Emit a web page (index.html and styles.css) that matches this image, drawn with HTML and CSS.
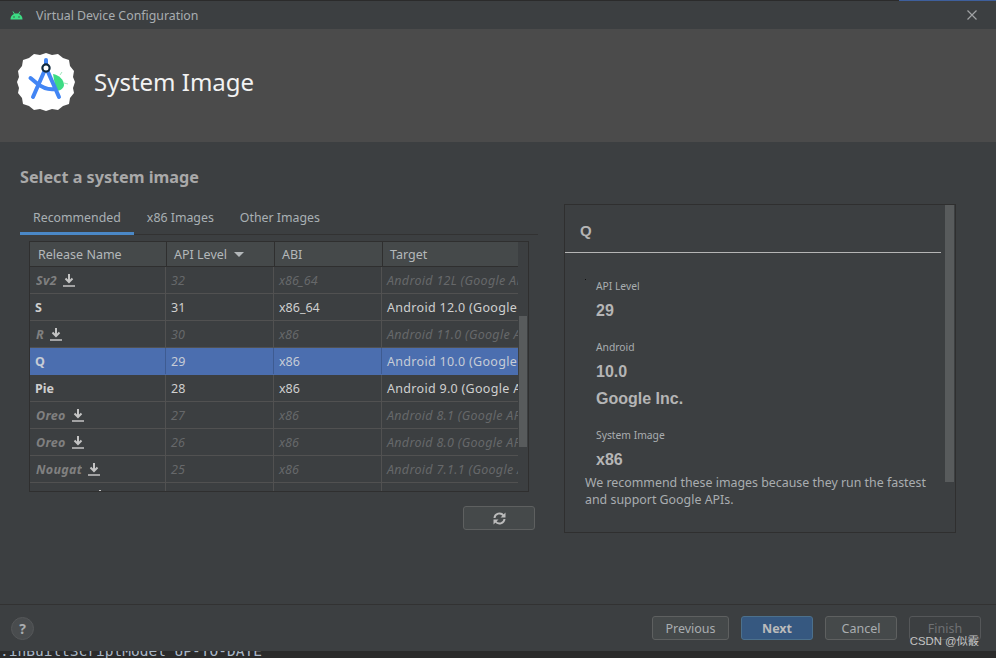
FILE: index.html
```html
<!DOCTYPE html>
<html lang="en">
  <head>
    <meta charset="UTF-8" />
    <meta name="viewport" content="width=device-width, initial-scale=1.0" />
    <title>Virtual Device Configuration</title>
    <link rel="stylesheet" href="styles.css">
  </head>
  <body>
    <div class="top-strip"><span class="top-strip-blue"></span></div>

    <!-- Title bar -->
    <div class="titlebar">
      <svg class="droid" width="13" height="9" viewBox="0 0 13 9">
        <path d="M.5 8.500C.5 5 3 2.500 6.500 2.500s6 2.500 6 6z" fill="#3ddc84" />
        <path d="M3 .5l1.500 2.500M10 .5L8.500 3" stroke="#3ddc84" stroke-width="1" />
        <circle cx="4" cy="6" r=".7" fill="#3c3f41" />
        <circle cx="9" cy="6" r=".7" fill="#3c3f41" />
      </svg>
      <span class="titlebar-text">Virtual Device Configuration</span>
      <svg class="close" width="10" height="10" viewBox="0 0 10 10">
        <path d="M.5.500l9 9M9.500.500l-9 9" stroke="#a0a2a4" stroke-width="1.200" />
      </svg>
    </div>

    <!-- Header -->
    <div class="header">
      <svg class="logo" width="60" height="60" viewBox="0 0 60 60">
        <path d="M30 1l6 2 6-1 5 4 6 2 1 6 4 5-1 6 2 5-2 6 1 5-4 5-1 6-6 2-5 4-6-1-6 2-6-2-6 1-5-4-6-2-1-6-4-5 1-5-2-6 2-5-1-6 4-5 1-6 6-2 5-4 6 1z" fill="#fff" />
        <path d="M37 22c6 1 11 6 11 11 0 3-4 6-8 6z" fill="#3ddc84" />
        <path d="M44 23l2-3M48 31l4 1" stroke="#9ee8bd" stroke-width="1" />
        <path d="M30 8v8M28 20L17 45M32 20l11 25M14.500 26l6 5c6 5 13 7 19 6" stroke="#4285f4" stroke-width="4" fill="none" stroke-linecap="round" />
        <circle cx="30" cy="16" r="3.600" fill="#fff" stroke="#10293d" stroke-width="2.200" />
      </svg>
      <h1 class="header-title">System Image</h1>
    </div>

    <!-- Main content -->
    <div class="main">
      <h2 class="section-title">Select a system image</h2>
      <div class="columns">
        <div class="left">
          <div class="tabs">
            <div class="tab active">Recommended</div>
            <div class="tab">x86 Images</div>
            <div class="tab">Other Images</div>
          </div>

          <div class="table">
            <div class="table-inner">
              <div class="row head">
                <div class="cell">Release Name</div>
                <div class="cell">API Level <span class="sort"></span></div>
                <div class="cell">ABI</div>
                <div class="cell">Target</div>
              </div>
              <div class="row off">
                <div class="cell name"><span class="clip">Sv2</span><svg class="dl" width="12" height="13" viewBox="0 0 12 13"><path d="M6 0v7M2.500 4.500L6 8l3.500-3.500" stroke="#c4c4c4" stroke-width="2" fill="none" /><path d="M0 12h12" stroke="#c4c4c4" stroke-width="1.500" /></svg></div>
                <div class="cell">32</div>
                <div class="cell">x86_64</div>
                <div class="cell target">Android 12L (Google APIs)</div>
              </div>
              <div class="row">
                <div class="cell name">S</div>
                <div class="cell">31</div>
                <div class="cell">x86_64</div>
                <div class="cell target">Android 12.0 (Google APIs)</div>
              </div>
              <div class="row off">
                <div class="cell name"><span class="clip">R</span><svg class="dl" width="12" height="13" viewBox="0 0 12 13"><path d="M6 0v7M2.500 4.500L6 8l3.500-3.500" stroke="#c4c4c4" stroke-width="2" fill="none" /><path d="M0 12h12" stroke="#c4c4c4" stroke-width="1.500" /></svg></div>
                <div class="cell">30</div>
                <div class="cell">x86</div>
                <div class="cell target">Android 11.0 (Google APIs)</div>
              </div>
              <div class="row selected">
                <div class="cell name">Q</div>
                <div class="cell">29</div>
                <div class="cell">x86</div>
                <div class="cell target">Android 10.0 (Google APIs)</div>
              </div>
              <div class="row">
                <div class="cell name">Pie</div>
                <div class="cell">28</div>
                <div class="cell">x86</div>
                <div class="cell target">Android 9.0 (Google APIs)</div>
              </div>
              <div class="row off">
                <div class="cell name"><span class="clip">Oreo</span><svg class="dl" width="12" height="13" viewBox="0 0 12 13"><path d="M6 0v7M2.500 4.500L6 8l3.500-3.500" stroke="#c4c4c4" stroke-width="2" fill="none" /><path d="M0 12h12" stroke="#c4c4c4" stroke-width="1.500" /></svg></div>
                <div class="cell">27</div>
                <div class="cell">x86</div>
                <div class="cell target">Android 8.1 (Google APIs)</div>
              </div>
              <div class="row off">
                <div class="cell name"><span class="clip">Oreo</span><svg class="dl" width="12" height="13" viewBox="0 0 12 13"><path d="M6 0v7M2.500 4.500L6 8l3.500-3.500" stroke="#c4c4c4" stroke-width="2" fill="none" /><path d="M0 12h12" stroke="#c4c4c4" stroke-width="1.500" /></svg></div>
                <div class="cell">26</div>
                <div class="cell">x86</div>
                <div class="cell target">Android 8.0 (Google APIs)</div>
              </div>
              <div class="row off">
                <div class="cell name"><span class="clip">Nougat</span><svg class="dl" width="12" height="13" viewBox="0 0 12 13"><path d="M6 0v7M2.500 4.500L6 8l3.500-3.500" stroke="#c4c4c4" stroke-width="2" fill="none" /><path d="M0 12h12" stroke="#c4c4c4" stroke-width="1.500" /></svg></div>
                <div class="cell">25</div>
                <div class="cell">x86</div>
                <div class="cell target">Android 7.1.1 (Google APIs)</div>
              </div>
              <div class="row off">
                <div class="cell name"><svg class="dl last" width="12" height="13" viewBox="0 0 12 13"><path d="M6 0v7" stroke="#c4c4c4" stroke-width="2" fill="none" /></svg></div>
                <div class="cell"></div>
                <div class="cell"></div>
                <div class="cell"></div>
              </div>
            </div>
            <div class="table-scroll"><div class="table-thumb"></div></div>
          </div>

          <div class="refresh-row">
            <button class="btn refresh">
              <svg width="13" height="13" viewBox="0 0 13 13">
                <path d="M1.500 6A5 5 0 0 1 10.500 3.500M11.500 7A5 5 0 0 1 2.500 9.500" stroke="#bbb" stroke-width="2" fill="none" />
                <path d="M12.500 0.500v5h-5zM.5 12.500v-5h5z" fill="#bbb" />
              </svg>
            </button>
          </div>
        </div>

        <div class="panel">
          <div class="panel-content">
            <div class="panel-title">Q</div>
            <div class="panel-body">
              <span class="speck"></span>
              <div class="label first">API Level</div>
              <div class="value">29</div>
              <div class="label android">Android</div>
              <div class="value ver">10.0</div>
              <div class="value">Google Inc.</div>
              <div class="label image">System Image</div>
              <div class="value ver">x86</div>
              <p class="note">We recommend these images because they run the fastest and support Google APIs.</p>
            </div>
          </div>
          <div class="panel-scroll"></div>
        </div>
      </div>
    </div>

    <!-- Footer -->
    <div class="footer">
      <div class="help">?</div>
      <div class="footer-buttons">
        <button class="btn">Previous</button>
        <button class="btn primary">Next</button>
        <button class="btn cancel">Cancel</button>
        <button class="btn disabled">Finish</button>
      </div>
      <span class="watermark">CSDN @似霰</span>
    </div>

    <div class="terminal">:inBuiltScriptModel UP-TO-DATE</div>
  </body>
</html>
```

FILE: styles.css
```css
* {
  box-sizing: border-box;
}

html,
body {
  height: 100%;
}

body {
  margin: 0;
  display: flex;
  flex-direction: column;
  overflow: hidden;
  background: #3c3f41;
  color: #bbbbbb;
  font-family: "Noto Sans", "Open Sans", sans-serif;
  font-size: 13px;
}

.top-strip {
  height: 1px;
  display: flex;
  justify-content: flex-end;
  background: #2b2b2b;
}

.top-strip-blue {
  width: 97px;
  background: #3e5f9c;
}

/* Title bar */
.titlebar {
  height: 28px;
  display: flex;
  align-items: center;
  padding-left: 10px;
  padding-right: 19px;
  background: #3c3f41;
}

.titlebar-text {
  margin-left: 13px;
  font-size: 12.35px;
  color: #a8adb0;
}

.close {
  margin-left: auto;
}

/* Header */
.header {
  height: 113px;
  display: flex;
  align-items: center;
  padding: 0 0 7px 16px;
  background: #4b4b4b;
}

.header-title {
  margin: 0 0 2px 18px;
  font-size: 24px;
  font-weight: 400;
  color: #f2f2f2;
}

/* Main */
.main {
  height: 463px;
  padding: 24px 40px 0 20px;
  border-bottom: 1px solid #323232;
}

.section-title {
  margin: 0;
  height: 24px;
  line-height: 22px;
  font-size: 16.2px;
  font-weight: 700;
  color: #a9a9a9;
}

.columns {
  display: flex;
  align-items: flex-start;
  justify-content: space-between;
}

.left {
  width: 518px;
  margin-top: 15px;
}

.tabs {
  display: flex;
  height: 30px;
  border-bottom: 1px solid #323232;
}

.tab {
  height: 30px;
  padding: 4px 13px 0;
  font-size: 12.35px;
  color: #a9b0b4;
}

.tab.active {
  border-bottom: 3px solid #4a88c7;
}

/* Table */
.table {
  display: flex;
  width: 500px;
  height: 251px;
  margin: 6px 0 0 9px;
  overflow: hidden;
  border: 1px solid #2f2f2f;
  background: #3c3f41;
}

.table-inner {
  width: 488px;
  overflow: hidden;
}

.table-scroll {
  flex: 1;
  padding: 74px 1px 0 1px;
  background: #3c3f41;
}

.table-thumb {
  height: 131px;
  background: #585b5c;
}

.row {
  display: grid;
  grid-template-columns: 136px 108px 108px 136px;
  height: 27px;
  border-bottom: 1px solid #515151;
  font-size: 12.5px;
  color: #cfcfcf;
}

.cell {
  display: flex;
  align-items: center;
  padding: 0 0 0 5px;
  overflow: hidden;
  white-space: nowrap;
  border-right: 1px solid #515151;
}

.cell:last-child {
  border-right: 0;
}

.cell.name {
  font-weight: 700;
}

.cell.target {
  letter-spacing: 0.3px;
}

.head {
  grid-template-columns: 137px 108px 108px 135px;
  height: 25px;
  border-bottom: 1px solid #2f2f2f;
  background: #45494a;
  color: #b4b8ba;
}

.head .cell {
  padding-left: 7px;
  border-right: 1px solid #2f2f2f;
}

.head .cell:first-child {
  padding-left: 8px;
}

.head .cell:last-child {
  border-right: 0;
}

.sort {
  width: 0;
  height: 0;
  margin-left: 7px;
  border-left: 5px solid transparent;
  border-right: 5px solid transparent;
  border-top: 5px solid #b4b8ba;
}

.off {
  font-style: italic;
  color: #66686a;
}

.off .name {
  padding-left: 6px;
  letter-spacing: 0.3px;
  color: #808080;
}

.off .clip {
  overflow: hidden;
}

.dl {
  flex: none;
  margin-left: 6px;
}

/* Only the tip of this row's icon shows above the table edge */
.dl.last {
  margin-left: 58px;
}

.selected {
  background: #4b6eaf;
  color: #c6ccd6;
  border-bottom-color: #4b6eaf;
}

.selected .cell {
  border-right-color: #3e5b91;
}

.refresh-row {
  display: flex;
  justify-content: flex-end;
  margin-top: 14px;
  padding-right: 3px;
}

/* Buttons */
.btn {
  height: 24px;
  padding: 0;
  border: 1px solid #5e6060;
  border-radius: 3px;
  background: #45494a;
  color: #a9adb0;
  font-family: inherit;
  font-size: 12.5px;
}

.refresh {
  width: 72px;
  display: flex;
  align-items: center;
  justify-content: center;
}

/* Right panel */
.panel {
  display: flex;
  width: 392px;
  height: 329px;
  margin-top: 14px;
  border: 1px solid #2f2f2f;
}

.panel-content {
  width: 376px;
}

.panel-title {
  height: 48px;
  padding: 14px 0 0 15px;
  border-bottom: 1px solid #b5b5b5;
  font-family: "Liberation Sans", sans-serif;
  font-size: 15px;
  font-weight: 700;
  line-height: 24px;
  color: #b5b5b5;
}

.panel-body {
  position: relative;
  padding: 26px 0 0 31px;
}

.speck {
  position: absolute;
  top: 26px;
  left: 20px;
  width: 1px;
  height: 1px;
  background: #111111;
}

.label {
  margin-top: 16px;
  height: 14px;
  line-height: 14px;
  font-size: 10.300px;
  color: #a9adb0;
}

.label.first {
  margin-top: 0;
}

.label.android {
  margin-top: 19px;
}

.label.image {
  margin-top: 19px;
}

.value {
  margin-top: 7px;
  height: 20px;
  line-height: 20px;
  font-family: "Liberation Sans", sans-serif;
  font-size: 16px;
  font-weight: 700;
  color: #b5b5b5;
}

.value.ver {
  margin-top: 8px;
}

.label.first + .value {
  margin-top: 8px;
}

.note {
  width: 350px;
  margin: 4px 0 0 -11px;
  font-size: 12.400px;
  line-height: 17px;
  color: #a9adb0;
}

.panel-scroll {
  width: 9px;
  height: 277px;
  margin-left: 4px;
  background: #585b5c;
}

/* Footer */
.footer {
  position: relative;
  flex: 1;
  display: flex;
  align-items: flex-start;
  justify-content: space-between;
  padding: 11px 15px 0 11px;
}

.help {
  width: 23px;
  height: 23px;
  margin-top: 1px;
  border-radius: 50%;
  border: 1px solid #555759;
  background: #494c4e;
  text-align: center;
  font-size: 14px;
  font-weight: 700;
  line-height: 21px;
  color: #a9adb0;
}

.footer-buttons {
  display: flex;
}

.footer-buttons .btn {
  width: 77px;
  height: 24px;
}

.footer-buttons .primary {
  width: 72px;
  margin-left: 12px;
  border-color: #4c708c;
  background: #365880;
  color: #bbbbbb;
  font-weight: 700;
}

.footer-buttons .cancel {
  width: 72px;
  margin-left: 12px;
}

.footer-buttons .disabled {
  width: 72px;
  margin-left: 12px;
  background: transparent;
  border-color: #555759;
  color: #6f7173;
}

.watermark {
  position: absolute;
  right: 17px;
  bottom: 3px;
  font-family: "Liberation Sans", "Noto Sans CJK SC", sans-serif;
  font-size: 11.300px;
  color: #c4c4c4;
}

/* Terminal behind the dialog */
.terminal {
  height: 7px;
  overflow: hidden;
  background: #2b2b2b;
  color: #a9b7c6;
  font-family: "DejaVu Sans Mono", monospace;
  font-size: 14.500px;
  line-height: 1px;
  white-space: nowrap;
}
```
